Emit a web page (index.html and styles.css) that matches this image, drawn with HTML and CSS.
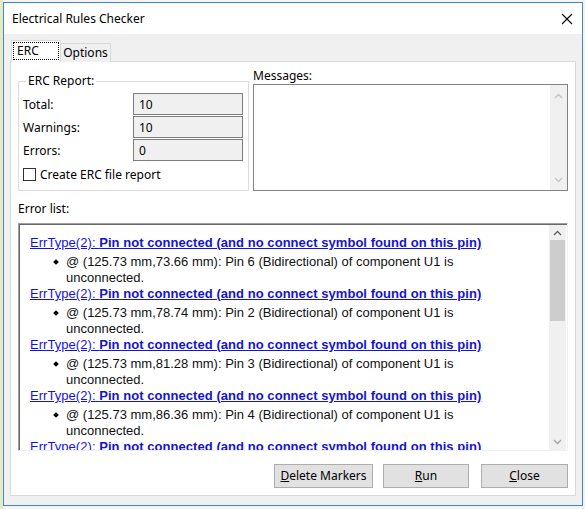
FILE: index.html
```html
<!DOCTYPE html>
<html>
<head>
<meta charset="utf-8">
<link rel="stylesheet" href="styles.css">
</head>
<body>
<div class="window">
  <div class="titlebar">
    <span class="title">Electrical Rules Checker</span>
    <svg class="close" width="12" height="12" viewBox="0 0 12 12"><path d="M1 1 L11 11 M11 1 L1 11" stroke="#000" stroke-width="1.1" fill="none"/></svg>
  </div>
  <div class="client">
    <div class="tabs">
      <div class="tab active"><span class="focus">ERC</span></div>
      <div class="tab">Options</div>
    </div>
    <div class="panel">
      <div class="top-row">
        <fieldset class="group">
          <legend>ERC Report:</legend>
          <div class="field"><span class="flabel">Total:</span><span class="fvalue">10</span></div>
          <div class="field"><span class="flabel">Warnings:</span><span class="fvalue">10</span></div>
          <div class="field"><span class="flabel">Errors:</span><span class="fvalue">0</span></div>
          <div class="check"><span class="box"></span><span>Create ERC file report</span></div>
        </fieldset>
        <div class="messages">
          <div class="mlabel">Messages:</div>
          <div class="msgbox">
            <div class="vscroll light">
              <svg width="9" height="6" viewBox="0 0 9 6"><polyline points="1,5 4.5,1.5 8,5" fill="none" stroke="#c4c4c4" stroke-width="1.3"/></svg>
              <svg width="9" height="6" viewBox="0 0 9 6"><polyline points="1,1 4.5,4.5 8,1" fill="none" stroke="#c4c4c4" stroke-width="1.3"/></svg>
            </div>
          </div>
        </div>
      </div>
      <div class="elabel">Error list:</div>
      <div class="errlist">
        <div class="errcontent">
          <div class="item">
            <div class="link">ErrType(2): <b>Pin not connected (and no connect symbol found on this pin)</b></div>
            <div class="detail"><span class="mark"></span><span class="dtext">@ (125.73 mm,73.66 mm): Pin 6 (Bidirectional) of component U1 is<br>unconnected.</span></div>
          </div>
          <div class="item">
            <div class="link">ErrType(2): <b>Pin not connected (and no connect symbol found on this pin)</b></div>
            <div class="detail"><span class="mark"></span><span class="dtext">@ (125.73 mm,78.74 mm): Pin 2 (Bidirectional) of component U1 is<br>unconnected.</span></div>
          </div>
          <div class="item">
            <div class="link">ErrType(2): <b>Pin not connected (and no connect symbol found on this pin)</b></div>
            <div class="detail"><span class="mark"></span><span class="dtext">@ (125.73 mm,81.28 mm): Pin 3 (Bidirectional) of component U1 is<br>unconnected.</span></div>
          </div>
          <div class="item">
            <div class="link">ErrType(2): <b>Pin not connected (and no connect symbol found on this pin)</b></div>
            <div class="detail"><span class="mark"></span><span class="dtext">@ (125.73 mm,86.36 mm): Pin 4 (Bidirectional) of component U1 is<br>unconnected.</span></div>
          </div>
          <div class="item">
            <div class="link">ErrType(2): <b>Pin not connected (and no connect symbol found on this pin)</b></div>
          </div>
        </div>
        <div class="vscroll">
          <svg width="9" height="6" viewBox="0 0 9 6"><polyline points="1,5 4.5,1.5 8,5" fill="none" stroke="#606060" stroke-width="1.3"/></svg>
          <div class="track"><div class="thumb"></div></div>
          <svg width="9" height="6" viewBox="0 0 9 6"><polyline points="1,1 4.5,4.5 8,1" fill="none" stroke="#a0a0a0" stroke-width="1.3"/></svg>
        </div>
      </div>
      <div class="buttons">
        <div class="btn w-del"><span class="mn">Delete Markers</span></div>
        <div class="btn w-run"><span class="mn">Run</span></div>
        <div class="btn w-close"><span class="mn">Close</span></div>
      </div>
    </div>
  </div>
</div>
</body>
</html>
```

FILE: styles.css
```css
html, body {
  margin: 0;
  padding: 0;
}
body {
  width: 585px;
  height: 509px;
  overflow: hidden;
  background: linear-gradient(to right, #e7ebc4 0, #e7ebc4 3px, #f3f3f3 3px);
  font-family: "Noto Sans", "Open Sans", sans-serif;
  font-size: 12px;
  color: #000;
}
.window {
  margin: 2px 0 0 3px;
  width: 578px;
  height: 502px;
  border: 1px solid #3a87d3;
  background: #f0f0f0;
  display: flex;
  flex-direction: column;
}
.titlebar {
  height: 31px;
  flex: none;
  background: #fff;
  display: flex;
  align-items: center;
  justify-content: space-between;
  padding: 0 9px 0 8px;
}
.title {
  font-size: 12px;
  line-height: 14px;
  margin-top: 1px;
}
.close {
  display: block;
}
.client {
  flex: 1;
  background: #f0f0f0;
  display: flex;
  flex-direction: column;
}
.tabs {
  display: flex;
  align-items: flex-end;
  margin-top: 6px;
  padding-left: 7px;
  height: 22px;
  position: relative;
  z-index: 1;
}
.tab {
  box-sizing: border-box;
  height: 19px;
  width: 50px;
  border: 1px solid #d9d9d9;
  border-bottom: none;
  border-left: none;
  background: #f0f0f0;
  display: flex;
  align-items: center;
  justify-content: center;
  line-height: 14px;
  padding-top: 0;
}
.tab.active {
  height: 22px;
  width: 50px;
  border-left: 1px solid #d9d9d9;
  background: #fff;
  padding: 1px;
  align-items: stretch;
  justify-content: stretch;
}
.focus {
  flex: 1;
  border: 1px dotted #000;
  display: flex;
  align-items: center;
  padding-left: 3px;
  margin-bottom: 1px;
}
.panel {
  margin: -1px 6px 0 6px;
  background: #fff;
  border: 1px solid #d9d9d9;
  padding: 0 7px 7px 7px;
  display: flex;
  flex-direction: column;
}
.top-row {
  display: flex;
  padding-top: 7px;
  gap: 4px;
}
.group {
  margin: 5px 0 0 0;
  width: 231px;
  height: 117px;
  box-sizing: border-box;
  border: 1px solid #dcdcdc;
  padding: 0 5px 0 4px;
  min-width: 0;
}
.group legend {
  padding: 0 2px;
  margin-left: 3px;
  line-height: 14px;
}
.field {
  display: flex;
  align-items: center;
  height: 22px;
  margin-top: 1px;
}
.field:first-of-type {
  margin-top: 5px;
}
.flabel {
  width: 110px;
}
.fvalue {
  box-sizing: border-box;
  width: 110px;
  height: 22px;
  border: 1px solid #7e7e7e;
  background: #f0f0f0;
  padding-left: 5px;
  display: flex;
  align-items: center;
}
.check {
  display: flex;
  align-items: center;
  margin-top: 5px;
  gap: 4px;
}
.box {
  width: 11px;
  height: 11px;
  border: 1px solid #333;
  background: #fff;
}
.messages {
  flex: 1;
  display: flex;
  flex-direction: column;
}
.mlabel {
  line-height: 14px;
  margin-bottom: 1px;
}
.msgbox {
  height: 107px;
  box-sizing: border-box;
  border: 1px solid #828282;
  display: flex;
  justify-content: flex-end;
}
.vscroll {
  width: 17px;
  background: #f0f0f0;
  display: flex;
  flex-direction: column;
  align-items: center;
  justify-content: space-between;
  padding: 6px 0;
  box-sizing: border-box;
}
.vscroll.light {
  padding: 8px 0 7px;
}
.elabel {
  margin-top: 11px;
  line-height: 14px;
}
.errlist {
  margin-top: 7px;
  height: 228px;
  box-sizing: border-box;
  border-top: 1px solid #a0a0a0;
  border-left: 1px solid #a0a0a0;
  border-right: 1px solid #f0f0f0;
  border-bottom: 1px solid #f0f0f0;
  box-shadow: inset 1px 1px 0 #696969;
  display: flex;
  overflow: hidden;
}
.errcontent {
  flex: 1;
  padding: 11px 0 0 11px;
  font-family: "Liberation Sans", Arial, sans-serif;
  font-size: 13px;
  overflow: hidden;
}
.link {
  line-height: 16px;
  color: #1212e8;
  text-decoration: underline;
  white-space: nowrap;
  letter-spacing: 0.05px;
}
.link b {
  color: #1414d0;
}
.detail {
  display: flex;
  margin-top: 3px;
  line-height: 16px;
  color: #111;
}
.mark {
  width: 36px;
  flex: none;
  position: relative;
}
.mark::before {
  content: "";
  position: absolute;
  right: 8px;
  top: 6px;
  width: 4px;
  height: 4px;
  background: #000;
  transform: rotate(45deg);
}
.errlist .vscroll {
  margin: 1px 1px 0 0;
  padding: 5px 0 5px;
}
.track {
  flex: 1;
  width: 100%;
  padding: 4px 1px 0;
  box-sizing: border-box;
}
.thumb {
  height: 81px;
  background: #cdcdcd;
}
.buttons {
  display: flex;
  justify-content: flex-end;
  margin-top: 13px;
  gap: 10px;
}
.btn {
  box-sizing: border-box;
  height: 24px;
  border: 1px solid #adadad;
  background: #e1e1e1;
  display: flex;
  align-items: center;
  justify-content: center;
}
.mn {
  display: block;
  line-height: 14px;
}
.mn::first-letter {
  text-decoration: underline;
}
.w-del { width: 99px; }
.w-run { width: 86px; margin-right: 2px; }
.w-close { width: 87px; }
```
